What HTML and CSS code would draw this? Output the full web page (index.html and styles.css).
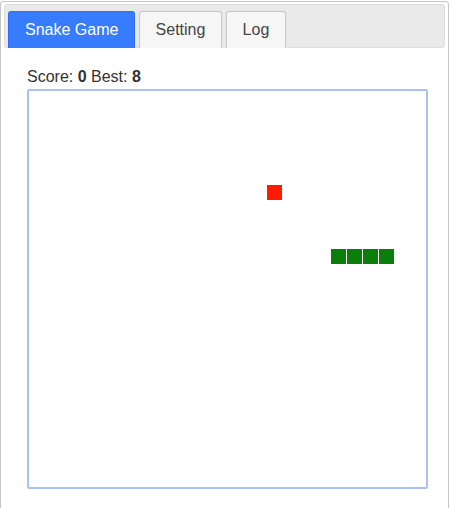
FILE: index.html
```html
<!DOCTYPE html>
<html>
<head>
<meta charset="utf-8">
<link rel="stylesheet" href="styles.css">
</head>
<body>
<div class="tabs">
  <ul class="nav">
    <li class="tab active">Snake Game</li>
    <li class="tab">Setting</li>
    <li class="tab">Log</li>
  </ul>
  <div class="panel">
    <div class="score">Score: <b>0</b> Best: <b>8</b></div>
    <div class="board">
      <svg class="field" width="397" height="396" viewBox="0 0 397 396">
        <rect class="food" x="238" y="94" width="15" height="15"/>
        <rect class="snake" x="302" y="158" width="15" height="15"/>
        <rect class="snake" x="318" y="158" width="15" height="15"/>
        <rect class="snake" x="334" y="158" width="15" height="15"/>
        <rect class="snake" x="350" y="158" width="15" height="15"/>
      </svg>
    </div>
  </div>
</div>
</body>
</html>
```

FILE: styles.css
```css
html, body {
  margin: 0;
  padding: 0;
  background: #ffffff;
}
body {
  font-family: "Liberation Sans", Arial, sans-serif;
  overflow: hidden;
}
.tabs {
  box-sizing: border-box;
  width: 449px;
  height: 540px;
  margin-top: 1px;
  border: 1px solid #c5c5c5;
  border-radius: 3px;
  padding: 2px 3px 3px 3px;
  background: #ffffff;
}
.nav {
  list-style: none;
  margin: 0;
  padding: 0 3px;
  height: 42px;
  display: flex;
  align-items: flex-end;
  gap: 3.2px;
  background: #e9e9e9;
  border: 1px solid #dddddd;
  border-radius: 3px;
}
.tab {
  box-sizing: border-box;
  height: 37px;
  margin-bottom: -1px;
  padding: 9px 16px 0 16px;
  font-size: 16px;
  line-height: 18px;
  color: #454545;
  background: #f6f6f6;
  border: 1px solid #c5c5c5;
  border-bottom: none;
  border-radius: 3px 3px 0 0;
}
.tab.active {
  background: #377cff;
  border-color: #2f6ef0;
  color: #ffffff;
}
.panel {
  padding: 20px 0 0 23px;
}
.score {
  font-size: 16px;
  line-height: 18px;
  color: #333333;
  height: 18px;
  margin-bottom: 3px;
}
.score b {
  font-weight: bold;
}
.board {
  width: 397px;
  height: 396px;
  border: 2px solid #a9c2f2;
  border-radius: 2px;
  background: #ffffff;
}
.field {
  display: block;
}
.food {
  fill: #ff1a00;
}
.snake {
  fill: #0a7d0a;
}
```
